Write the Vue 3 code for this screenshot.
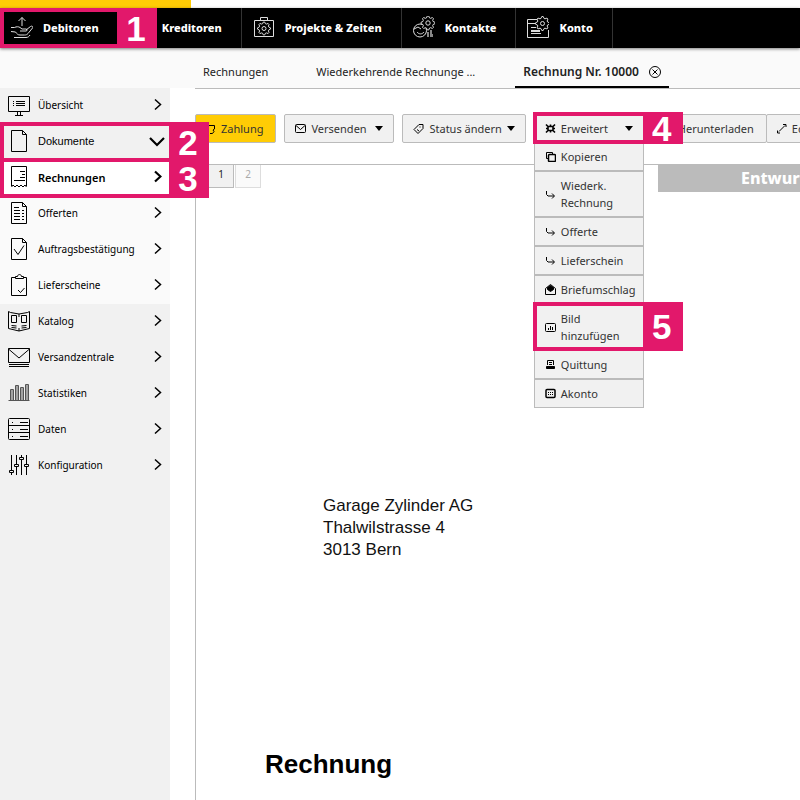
<script setup>
const gear = (cx, cy, r, rim) => {
  const points = []
  for (let i = 0; i < 32; i++) {
    const a = ((i - 0.5) / 32) * Math.PI * 2
    const d = i % 4 < 2 ? r : rim
    points.push(`${(cx + d * Math.cos(a)).toFixed(2)},${(cy + d * Math.sin(a)).toFixed(2)}`)
  }
  return points.join(' ')
}

const topNav = [
  {
    label: 'Debitoren',
    step: 1,
    icon: '<path d="M11 10V1.500M7.500 5L11 1.500L14.500 5M0 11.500h3.500c2-1 4-1 5.500 0l2 1.500h4c1.500 0 1.500 2 0 2H9M15 14l4.500-3.500c1.500-1 3 .3 2 1.500L17 17.500c-1 1.200-2 1.500-3.500 1.500H9c-2 0-3-1-4.500-3L0 15.500M3 21.500h12c2 0 3-1 4-2.500"/>'
  },
  {
    label: 'Kreditoren',
    icon: '<path d="M11 1v9M7.500 6.500L11 10l3.500-3.500M1 13h6l3 2h6M1 20h14l6-6"/>'
  },
  {
    label: 'Projekte & Zeiten',
    icon: `<path d="M1.500 4.500h19v16h-19zM7.500 4V1.500h7V4"/><polygon points="${gear(11, 12.5, 6.5, 5)}" fill="#000"/><circle cx="11" cy="12.500" r="2"/>`
  },
  {
    label: 'Kontakte',
    icon: `<circle cx="7" cy="14.500" r="6.500"/><path d="M1 13l4-2 3 2M4 16c2 2.500 5 2.500 7 0"/><path d="M14 16h2v5h-2zM17 14h2v7h-2zM19 18h1v3h-1z" fill="#888" stroke="none"/><polygon points="${gear(15, 7, 7, 5.3)}" fill="#000"/><circle cx="15" cy="7" r="2.200"/>`
  },
  {
    label: 'Konto',
    icon: `<path d="M10 3.500H.5v18h21V14M.5 7.500h8M4 11.500h5M4 14.500h9M4 17.500h10M4 15.500h9" /><polygon points="${gear(15.5, 7.5, 7, 5.3)}" fill="#000"/><circle cx="15.500" cy="7.500" r="2"/>`
  }
]

const page = '<path d="M3.500 .5h11l4 4v17h-15zM14.500 .5v4h4"/>'

const sideNav = [
  {
    label: 'Übersicht',
    icon: '<path d="M.5 2.500h21v15H.5zM9.500 18v3M12.500 18v3M7 21.500h8M5 7.500h1M8 7.500h9M5 9.500h1M8 9.500h9M5 11.500h1M8 11.500h9"/>'
  },
  { label: 'Dokumente', kind: 'open', step: 2, icon: page },
  {
    label: 'Rechnungen',
    kind: 'current',
    step: 3,
    icon: '<path d="M3.500 20V.5h15V20M3.500 21l1.500-2 2 2 2-2 2 2 2-2 2 2 2-2 1.500 2M12 5.500h5M14 8.500h3M12 11.500h5M6 14.500h11"/>'
  },
  {
    label: 'Offerten',
    kind: 'sub',
    icon: page + '<path d="M6 5.500h5M6 8.500h6M14 8.500h2M6 11.500h6M14 11.500h2M6 14.500h6M14 14.500h2M6 17.500h6M14 17.500h2"/>'
  },
  { label: 'Auftragsbestätigung', kind: 'sub', icon: page + '<path d="M6 11l4 5.500 6-9"/>' },
  {
    label: 'Lieferscheine',
    kind: 'sub',
    icon: '<path d="M7 3.500H3.500v18h15v-18H15M7.500 4.500v-2h2c0-2.600 4-2.600 4 0h2v2zM10 16l2.500 2.500 4-4.500"/>'
  },
  {
    label: 'Katalog',
    icon: '<path d="M.5 1.500l2 1 8.500 1.500 8.500-1.500 2-1v17l-10.500 2.500L.5 18.500zM11 4v3M11 18v3M3.500 5.500h5v7h-5zM13.500 5.500h5v7h-5zM3.500 15.500l5 .5M3.500 17.500l5 .5M13.500 16l5-.5M13.500 18l5-.5"/>'
  },
  { label: 'Versandzentrale', icon: '<path d="M.5 2.500h21v14H.5zM.5 3l10.500 9 10.500-9M1 18.500h20M1 20.500h20"/>' },
  {
    label: 'Statistiken',
    icon: '<g stroke="#555"><path d="M.5 18.500h21M2.500 18V7.500h3V18M4 8v10M7.500 18V3.500h3V18M9 4v14M12.500 18V5.500h3V18M14 6v12M17.500 18V2.500h3V18M19 3v15"/></g>'
  },
  {
    label: 'Daten',
    icon: '<rect x=".5" y=".5" width="21" height="21" rx="1"/><path d="M.5 7.500h21M.5 14.500h21M4 4.500h1M4 11.500h1M4 18.500h1M12 4.500h8M12 11.500h8M12 18.500h8"/>'
  },
  {
    label: 'Konfiguration',
    icon: '<path d="M3.500 1v15M3.500 19v2M8.500 1v9M8.500 13v8M13.500 1v2M13.500 6v15M18.500 1v9M18.500 13v8M1.500 16.500h4v2h-4zM6.500 10.500h4v2h-4zM11.500 3.500h4v2h-4zM16.500 10.500h4v2h-4z"/>'
  }
]

const tabs = [
  { label: 'Rechnungen' },
  { label: 'Wiederkehrende Rechnunge ...' },
  { label: 'Rechnung Nr. 10000', active: true }
]

const arrow = '<path d="M1.500 2v3.500l1.500 1.500h6M7 4.500L9.500 7 7 9.500"/>'

const small = {
  pay: '<path d="M1 2.500h8.500v3.500l-1.500 1 1 1.500-1.500 2H5"/>',
  mail: '<rect x=".5" y="1.500" width="10" height="8" rx="1"/><path d="M1 2.500l4.500 4 4.500-4"/>',
  tag: '<path d="M1 6.500L6 1.500h4v4l-5 5zM7 3.500v1M4 6.500l2 1.500"/>',
  cog: '<path d="M1 1.500l2 2h5l2-2M1 9.500l2-2h5l2 2M3 3v5M8 3v5M1 5.500h2M8 5.500h2M5.500 1.500v2M5.500 7.500v2" stroke-width="1.600"/>',
  edit: '<path d="M1.500 7.500v2.500H4M7 1.500h3V4M3 8.500l6-6"/>'
}

const menu = [
  { label: 'Kopieren', icon: '<rect x="3.500" y="3.500" width="7" height="7" rx="1" stroke-width="1.500"/><path d="M3 7.500H1.500v-6h6V3"/>' },
  { label: 'Wiederk. Rechnung', icon: arrow },
  { label: 'Offerte', icon: arrow },
  { label: 'Lieferschein', icon: arrow },
  { label: 'Briefumschlag', icon: '<path d="M.5 4.500l5-4 5 4v6H.5z"/><path d="M2.500 3.500l3-2 3 2v2l-3 2-3-2z" fill="#000"/>' },
  { label: 'Bild hinzufügen', step: 5, icon: '<rect x=".5" y="1.500" width="10" height="8" rx="1"/><path d="M3.500 6v2M5.500 4v4M7.500 5v3"/>' },
  { label: 'Quittung', icon: '<path d="M2.500 6V1.500h6V6M4 3.500h3M4 5.500h3"/><path d="M1.500 7.500h8v2h-8z" fill="#000"/>' },
  { label: 'Akonto', icon: '<rect x="1" y="1.500" width="9" height="8" rx="1" stroke-width="1.500"/><path d="M3 4.500h1M5 4.500h1M7 4.500h1M3 6.500h1M5 6.500h1M7 6.500h1"/>' }
]
</script>

<template>
  <div class="app">
    <div class="brand"></div>
    <nav class="topnav" aria-label="Hauptnavigation">
      <a v-for="item in topNav" :key="item.label" href="#" class="top-link">
        <svg class="icon-lg" viewBox="0 0 22 22" v-html="item.icon"></svg>
        <span>{{ item.label }}</span>
        <span v-if="item.step" class="callout callout-top"><b class="step">{{ item.step }}</b></span>
      </a>
    </nav>

    <div class="tabbar">
      <nav class="tabs" aria-label="Register">
        <a v-for="tab in tabs" :key="tab.label" href="#" class="tab" :class="{ active: tab.active }">
          <span>{{ tab.label }}</span>
          <svg class="close" viewBox="0 0 12 12">
            <circle cx="6" cy="6" r="5.500" />
            <path d="M3.500 3.500l5 5M8.500 3.500l-5 5" />
          </svg>
        </a>
      </nav>
    </div>

    <div class="body">
      <nav class="sidebar" aria-label="Bereiche">
        <a v-for="item in sideNav" :key="item.label" href="#" class="side-link" :class="item.kind">
          <svg class="icon-lg" viewBox="0 0 22 22" v-html="item.icon"></svg>
          <span class="side-label">{{ item.label }}</span>
          <svg v-if="item.kind === 'open'" class="chevron down" viewBox="0 0 16 12"><path d="M1 3l7 7 7-7" /></svg>
          <svg v-else class="chevron" viewBox="0 0 8 14"><path d="M1 1.500l5.500 5L1 11.500" /></svg>
          <span v-if="item.step" class="callout callout-side"><b class="step">{{ item.step }}</b></span>
        </a>
      </nav>

      <main class="content">
        <div class="toolbar">
          <button type="button" class="btn primary">
            <svg class="icon-sm" viewBox="0 0 11 11" v-html="small.pay"></svg>Zahlung
          </button>
          <button type="button" class="btn select">
            <svg class="icon-sm" viewBox="0 0 11 11" v-html="small.mail"></svg>Versenden<i class="caret"></i>
          </button>
          <button type="button" class="btn select">
            <svg class="icon-sm" viewBox="0 0 11 11" v-html="small.tag"></svg>Status ändern<i class="caret"></i>
          </button>
          <div class="dropdown">
            <button type="button" class="btn select" aria-expanded="true">
              <svg class="icon-sm" viewBox="0 0 11 11" v-html="small.cog"></svg>Erweitert<i class="caret"></i>
            </button>
            <span class="callout callout-button"><b class="step">4</b></span>
            <div class="menu">
              <button v-for="item in menu" :key="item.label" type="button" class="menu-item">
                <svg class="icon-sm" viewBox="0 0 11 11" v-html="item.icon"></svg>
                <span>{{ item.label }}</span>
                <span v-if="item.step" class="callout callout-menu"><b class="step">{{ item.step }}</b></span>
              </button>
            </div>
          </div>
          <div class="group">
            <button type="button" class="btn">
              <svg class="icon-sm" viewBox="0 0 11 11"><path d="M5.500 1v6M3 5l2.500 2.500L8 5M1 10h9" /></svg>Herunterladen
            </button>
            <button type="button" class="btn">
              <svg class="icon-sm" viewBox="0 0 11 11" v-html="small.edit"></svg>Editieren
            </button>
          </div>
        </div>

        <section class="preview">
          <div class="preview-head">
            <div class="pages">
              <button type="button" class="page">1</button>
              <button type="button" class="page" disabled>2</button>
            </div>
            <div class="status">Entwurf</div>
          </div>
          <article class="paper">
            <address>Garage Zylinder AG<br />Thalwilstrasse 4<br />3013 Bern</address>
            <h1>Rechnung</h1>
          </article>
        </section>
      </main>
    </div>
  </div>
</template>

<style>
body {
  background: #fff;
}
</style>

<style scoped>
.app {
  display: flex;
  flex-direction: column;
  min-height: 100vh;
  overflow: hidden;
  font-family: "Noto Sans", "Open Sans", sans-serif;
  font-size: 11px;
  color: #222;
}
.app * {
  box-sizing: border-box;
}
a {
  color: inherit;
  text-decoration: none;
}
button {
  font: inherit;
  color: inherit;
}
svg {
  flex: none;
  fill: none;
  stroke: currentColor;
  stroke-width: 1;
}
.icon-lg {
  width: 22px;
  height: 22px;
}
.icon-sm {
  width: 11px;
  height: 11px;
  color: #000;
}
.brand {
  width: 191px;
  height: 8px;
  background: #ffcc05;
}
.topnav {
  position: relative;
  z-index: 3;
  display: flex;
  height: 40px;
  background: #000;
  color: #fff;
  font-weight: 800;
  box-shadow: 0 1px 3px rgba(0, 0, 0, 0.5);
}
.top-link {
  position: relative;
  display: flex;
  align-items: center;
  gap: 10px;
  padding: 0 19px 2px 11px;
  border-right: 1px solid #333;
  white-space: nowrap;
}
.top-link .icon-lg {
  color: #ddd;
}
.tabbar {
  height: 41px;
  padding-left: 195px;
  background: linear-gradient(#fafafa, #fafafa) 0 0 / 100% 40px no-repeat;
}
.tabs {
  display: flex;
  gap: 10px;
  height: 41px;
  border-bottom: 1px solid #bbb;
}
.tab {
  display: flex;
  align-items: center;
  gap: 10px;
  height: 40px;
  padding: 9px 8px 0;
  border-bottom: 2px solid transparent;
  white-space: nowrap;
}
.tab.active {
  border-color: #000;
  font-size: 12px;
  font-weight: 600;
}
.close {
  width: 12px;
  height: 12px;
  visibility: hidden;
  color: #000;
}
.active .close {
  visibility: visible;
}
.body {
  display: flex;
  flex: 1;
  margin-top: -1px;
}
.sidebar {
  position: relative;
  z-index: 2;
  flex: none;
  width: 170px;
  background: #f1f1f1;
  color: #000;
  font-size: 10px;
}
.side-link {
  position: relative;
  display: flex;
  align-items: center;
  gap: 8px;
  height: 36px;
  padding: 0 8px 2px;
}
.side-label {
  flex: 1;
  white-space: nowrap;
}
.sub {
  background: #fafafa;
}
.current {
  background: #fff;
  font-size: 11px;
  font-weight: 600;
}
.open {
  font-family: "Liberation Sans", Arial, sans-serif;
  font-size: 11px;
}
.chevron {
  width: 8px;
  height: 14px;
  stroke-width: 1.5;
}
.current .chevron {
  stroke-width: 2.2;
}
.chevron.down {
  width: 16px;
  height: 12px;
  margin-right: -3px;
  stroke-width: 2.2;
}
.callout {
  position: absolute;
  z-index: 4;
  border: 4px solid #e2186b;
  pointer-events: none;
}
.step {
  position: absolute;
  top: -4px;
  bottom: -4px;
  left: 100%;
  display: flex;
  align-items: center;
  justify-content: center;
  width: 40px;
  padding-right: 2px;
  background: #e2186b;
  color: #fff;
  font: 700 35px/1 "Liberation Sans", Arial, sans-serif;
}
.callout-top {
  inset: 0 auto 0 0;
  width: 121px;
}
.callout-side {
  inset: -2px -3px -2px 0;
}
.callout-button {
  inset: -2px -3px -1px -1px;
}
.callout-menu {
  inset: -3px -4px -2px -2px;
}
.content {
  flex: 1;
  display: flex;
  flex-direction: column;
  min-width: 0;
  padding: 26px 0 0 25px;
}
.toolbar {
  display: flex;
  align-items: flex-start;
  gap: 8px;
  height: 50px;
}
.toolbar > * {
  flex: none;
}
.btn {
  display: flex;
  align-items: center;
  gap: 5px;
  height: 29px;
  padding: 0 12px 1px 9px;
  background: #f1f1f1;
  border: 1px solid #bbb;
  border-radius: 2px;
  color: #333;
  white-space: nowrap;
}
.btn.primary {
  background: #ffcc05;
}
.btn.select {
  min-width: 110px;
  padding-right: 10px;
  padding-left: 10px;
}
.caret {
  flex: none;
  margin-left: auto;
  border: 4px solid transparent;
  border-top: 5px solid #000;
  border-bottom: 0;
}
.group {
  display: flex;
}
.group .btn + .btn {
  margin-left: -1px;
}
.dropdown {
  position: relative;
}
.menu {
  position: absolute;
  z-index: 2;
  top: 28px;
  left: 0;
  width: 110px;
  border: 1px solid #bbb;
  border-bottom: 0;
}
.menu-item {
  position: relative;
  display: flex;
  align-items: center;
  gap: 5px;
  width: 100%;
  padding: 5px 4px 5px 10px;
  background: #f1f1f1;
  border: 0;
  border-bottom: 2px solid #bbb;
  color: #333;
  line-height: 17px;
  text-align: left;
}
.menu-item:last-child {
  border-bottom-width: 1px;
}
.preview {
  flex: 1;
  border: 1px solid #bbb;
  border-width: 1px 0 0 1px;
}
.preview-head {
  display: flex;
  justify-content: space-between;
  padding-left: 12px;
}
.pages {
  display: flex;
  gap: 1px;
}
.page {
  width: 26px;
  height: 23px;
  padding: 0 0 4px;
  background: #f1f1f1;
  border: 1px solid #bbb;
  border-top: 0;
  font-size: 10px;
}
.page:disabled {
  background: #fafafa;
  border-color: #ddd;
  color: #aaa;
}
.status {
  width: 142px;
  height: 27px;
  padding-left: 83px;
  background: #bbb;
  color: #fff;
  font-size: 16px;
  font-weight: 800;
  line-height: 26px;
  overflow: hidden;
}
.paper {
  padding: 303px 0 0 69px;
  color: #111;
  font-family: "Liberation Sans", Arial, sans-serif;
}
address {
  padding-left: 58px;
  font-size: 17px;
  font-style: normal;
  line-height: 22px;
}
h1 {
  margin: 188px 0 0;
  color: #000;
  font-size: 26px;
  line-height: 30px;
}
</style>
